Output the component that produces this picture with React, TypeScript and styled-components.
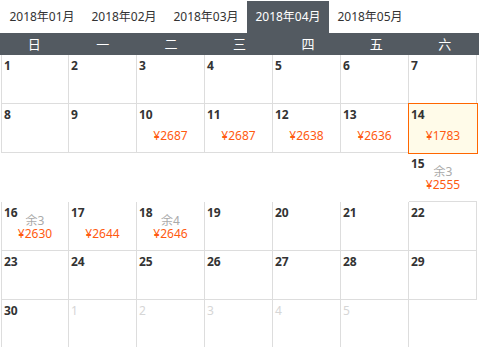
import React from 'react';
import styled, { createGlobalStyle } from 'styled-components';

const GlobalStyle = createGlobalStyle`
    html, body {
        margin: 0;
        padding: 0;
        background: #fff;
    }
    body {
        font-family: "Noto Sans", "Noto Sans CJK SC", sans-serif;
        color: #333;
    }
`;

const Page = styled.div`
    width: 479px;
    height: 347px;
    overflow: hidden;
`;

const Tabs = styled.div`
    display: flex;
    height: 33px;
    padding-left: 1px;
`;

const Tab = styled.div<{ $active?: boolean }>`
    width: 82px;
    margin-top: 1px;
    height: 32px;
    line-height: 32px;
    text-align: center;
    font-size: 12px;
    cursor: pointer;
    color: ${p => (p.$active ? '#fff' : '#333')};
    background: ${p => (p.$active ? '#535a61' : 'transparent')};
`;

const WeekHeader = styled.div`
    display: grid;
    grid-template-columns: repeat(7, 1fr);
    height: 22px;
    background: #535a61;
`;

const WeekDay = styled.div`
    color: #fff;
    font-size: 13px;
    line-height: 22px;
    text-align: center;
`;

const Grid = styled.div`
    display: grid;
    grid-template-columns: repeat(7, 68px);
    grid-auto-rows: 49px;
    margin-left: 1px;
`;

type Variant = 'normal' | 'selected' | 'loose' | 'empty';

const Cell = styled.div<{ $variant: Variant; $first?: boolean }>`
    box-sizing: border-box;
    position: relative;
    padding-left: 2px;
    overflow: hidden;
    border-right: ${p => (p.$variant === 'normal' ? '1px solid #ddd' : 'none')};
    border-bottom: ${p => (p.$variant === 'normal' || p.$variant === 'loose' ? '1px solid #ddd' : 'none')};
    border-left: ${p => (p.$first && p.$variant === 'normal' ? '1px solid #ddd' : 'none')};
    ${p =>
        p.$variant === 'selected' &&
        `
        margin: -1px;
        border: 1px solid #ff6600;
        background: #fffbe9;
        z-index: 1;
    `}
`;

const DayNum = styled.div<{ $other?: boolean }>`
    margin-top: 4px;
    height: 14px;
    line-height: 14px;
    font-size: 12px;
    font-weight: ${p => (p.$other ? 400 : 700)};
    color: ${p => (p.$other ? '#d6d6d6' : '#333')};
`;

const Info = styled.div`
    margin-top: -6px;
    display: flex;
    flex-direction: column;
    align-items: center;
    font-size: 12px;
    padding-right: 2px;
`;

const Rest = styled.div`
    height: 13px;
    line-height: 13px;
    color: #aaa;
`;

const Price = styled.div`
    height: 13px;
    line-height: 13px;
    color: #ff5a10;
`;

type Day = {
    day?: number;
    variant?: Variant;
    other?: boolean;
    price?: number;
    rest?: number;
};

const months = ['2018年01月', '2018年02月', '2018年03月', '2018年04月', '2018年05月'];
const weekDays = ['日', '一', '二', '三', '四', '五', '六'];

const prices: Record<number, { price: number; rest?: number }> = {
    10: { price: 2687 },
    11: { price: 2687 },
    12: { price: 2638 },
    13: { price: 2636 },
    14: { price: 1783 },
    15: { price: 2555, rest: 3 },
    16: { price: 2630, rest: 3 },
    17: { price: 2644 },
    18: { price: 2646, rest: 4 },
};

function buildDays(): Day[] {
    const days: Day[] = [];
    for (let d = 1; d <= 14; d++) {
        days.push({ day: d, variant: d === 14 ? 'selected' : 'normal', ...prices[d] });
    }
    for (let i = 0; i < 6; i++) days.push({ variant: 'empty' });
    days.push({ day: 15, variant: 'loose', ...prices[15] });
    for (let d = 16; d <= 30; d++) {
        days.push({ day: d, variant: 'normal', ...prices[d] });
    }
    for (let d = 1; d <= 5; d++) days.push({ day: d, variant: 'normal', other: true });
    days.push({ variant: 'empty' });
    return days;
}

export default function App() {
    const days = buildDays();
    return (
        <Page>
            <GlobalStyle />
            <Tabs>
                {months.map(m => (
                    <Tab key={m} $active={m === '2018年04月'}>{m}</Tab>
                ))}
            </Tabs>
            <WeekHeader>
                {weekDays.map(w => (
                    <WeekDay key={w}>{w}</WeekDay>
                ))}
            </WeekHeader>
            <Grid>
                {days.map((d, index) => (
                    <Cell key={index} $variant={d.variant ?? 'normal'} $first={index % 7 === 0}>
                        {d.day !== undefined && <DayNum $other={d.other}>{d.day}</DayNum>}
                        {d.price !== undefined && (
                            <Info>
                                <Rest>{d.rest !== undefined ? `余${d.rest}` : ''}</Rest>
                                <Price>¥{d.price}</Price>
                            </Info>
                        )}
                    </Cell>
                ))}
            </Grid>
        </Page>
    );
}
